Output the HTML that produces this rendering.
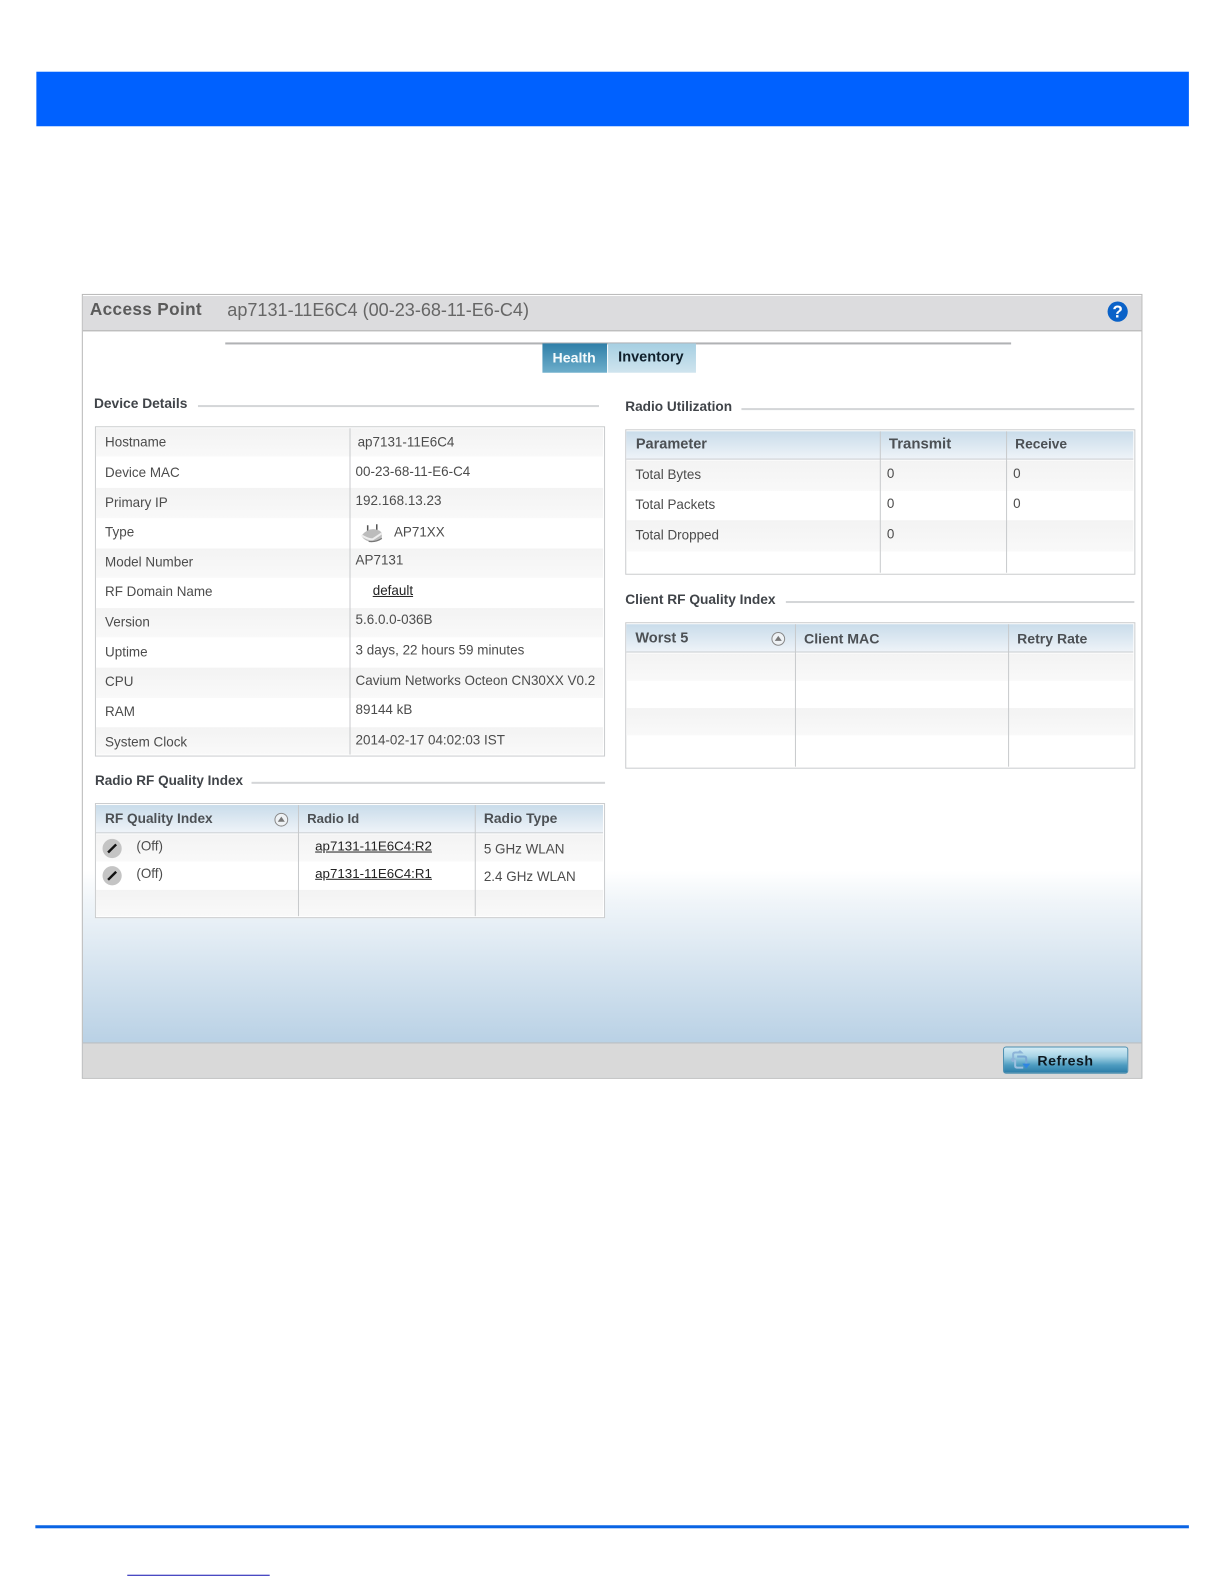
<!DOCTYPE html>
<html><head><meta charset="utf-8">
<style>
html,body{margin:0;padding:0;background:#fff}
#o{position:relative;width:1224px;height:1584px;overflow:hidden;background:#fff}
#p{position:absolute;left:0;top:0;width:1212px;height:1568px;transform:scale(1.0101);transform-origin:0 0;font-family:"Liberation Sans",sans-serif}
#p div,#p svg{position:absolute}
.t{font-size:13.3px;line-height:16px;height:16px;margin-top:.5px;color:#4c4c4c;white-space:nowrap}
.b{font-weight:bold;color:#4c5054;font-size:13.7px;line-height:16px;height:16px;margin-top:.6px;white-space:nowrap}
.s{font-weight:bold;color:#404449;font-size:13.5px;line-height:16px;height:16px;margin-top:.4px;white-space:nowrap}
.l{color:#222;text-decoration:underline}
.ln{height:1.6px;background:#d4d6d8}
.box{border:1.5px solid #cacccE;box-sizing:border-box;background:#fff}
.r{background:linear-gradient(#f3f3f3,#f9f9f9)}
.h{background:linear-gradient(#c9dcea,#eef3f8);border-bottom:1.5px solid #c8ccd0}
.v{width:1px;background:#c8cacc}
</style></head><body><div id="o"><div id="p">
<div style="left:36px;top:71px;width:1141px;height:54px;background:#0061ff"></div>

<div style="left:80.5px;top:291px;width:1050.5px;height:777px;box-sizing:border-box;border:1.5px solid #b8b8b8;background:linear-gradient(#fff 0,#fff 570px,#f0f5f9 600px,#b9d1e5 741px)"></div>
<div style="left:82px;top:292.5px;width:1047.5px;height:34.5px;background:#dcdcde;border-bottom:1px solid #b0b0b0"></div>
<div style="left:82px;top:1032px;width:1047.5px;height:34.5px;background:#d9d9d9;border-top:1px solid #b8bcc0;box-sizing:border-box"></div>
<div style="left:89px;top:297px;font-size:17px;line-height:20px;font-weight:bold;color:#5a5a5a;letter-spacing:.35px;white-space:nowrap">Access Point</div>
<div style="left:225px;top:297px;font-size:17.9px;line-height:20px;color:#666;white-space:nowrap">ap7131-11E6C4 (00-23-68-11-E6-C4)</div>
<svg style="left:1096px;top:298px" width="21" height="21" viewBox="0 0 21 21"><circle cx="10.5" cy="10.5" r="10" fill="#0a62c8"/><text x="10.5" y="16.5" text-anchor="middle" font-family="Liberation Sans" font-weight="bold" font-size="17" fill="#fff">?</text></svg>

<div style="left:223px;top:339px;width:778px;height:1.5px;background:#b0b2b4"></div>
<div style="left:537px;top:340px;width:64px;height:29px;background:linear-gradient(#2f7fa8,#6eaecb)"></div>
<div style="left:602px;top:340px;width:87px;height:29px;background:linear-gradient(#a6cfe2,#cfe4ee)"></div>
<div style="left:547px;top:346px;font-size:14px;line-height:16px;font-weight:bold;color:#f4fafc;white-space:nowrap">Health</div>
<div style="left:612px;top:346px;font-size:14.4px;line-height:16px;font-weight:bold;color:#10202c;white-space:nowrap">Inventory</div>

<!-- Device Details -->
<div class="s" style="left:93px;top:392px;font-size:13.65px">Device Details</div>
<div class="ln" style="left:196px;top:401px;width:397px"></div>
<div class="box" style="left:93.5px;top:422px;width:505px;height:326.5px"></div>
<div class="r" style="left:95px;top:423.5px;width:502px;height:28.5px"></div>
<div class="r" style="left:95px;top:483px;width:502px;height:30px"></div>
<div class="r" style="left:95px;top:543px;width:502px;height:29px"></div>
<div class="r" style="left:95px;top:602px;width:502px;height:29px"></div>
<div class="r" style="left:95px;top:661px;width:502px;height:30px"></div>
<div class="r" style="left:95px;top:720px;width:502px;height:27px"></div>
<div class="v" style="left:345.5px;top:424px;height:323px"></div>
<div class="t" style="left:104px;top:429px">Hostname</div>
<div class="t" style="left:104px;top:459px">Device MAC</div>
<div class="t" style="left:104px;top:489px">Primary IP</div>
<div class="t" style="left:104px;top:518px">Type</div>
<div class="t" style="left:104px;top:548px">Model Number</div>
<div class="t" style="left:104px;top:577px">RF Domain Name</div>
<div class="t" style="left:104px;top:607px">Version</div>
<div class="t" style="left:104px;top:637px">Uptime</div>
<div class="t" style="left:104px;top:666px">CPU</div>
<div class="t" style="left:104px;top:696px">RAM</div>
<div class="t" style="left:104px;top:726px">System Clock</div>
<div class="t" style="left:354px;top:429px">ap7131-11E6C4</div>
<div class="t" style="left:352px;top:458px">00-23-68-11-E6-C4</div>
<div class="t" style="left:352px;top:487px">192.168.13.23</div>
<svg style="left:356px;top:516px" width="24" height="22" viewBox="0 0 24 22"><path d="M8 4V10M17 3V10" stroke="#555" stroke-width="1.5"/><path d="M2 14Q8 7 15 8Q21 9 22 12V17Q16 21 9 20Q3 18 2 14Z" fill="#bcbcbc"/><path d="M2 14Q8 18 13 18L22 12" fill="none" stroke="#eee" stroke-width="2"/><path d="M9 20Q16 21 22 17" fill="none" stroke="#777" stroke-width="1.2"/></svg>
<div class="t" style="left:390px;top:518px">AP71XX</div>
<div class="t" style="left:352px;top:546px">AP7131</div>
<div class="t l" style="left:369px;top:576px">default</div>
<div class="t" style="left:352px;top:605px">5.6.0.0-036B</div>
<div class="t" style="left:352px;top:635px">3 days, 22 hours 59 minutes</div>
<div class="t" style="left:352px;top:665px">Cavium Networks Octeon CN30XX V0.2</div>
<div class="t" style="left:352px;top:694px">89144 kB</div>
<div class="t" style="left:352px;top:724px">2014-02-17 04:02:03 IST</div>

<!-- Radio RF Quality -->
<div class="s" style="left:94px;top:765px;font-size:13.4px">Radio RF Quality Index</div>
<div class="ln" style="left:249px;top:774px;width:349.5px"></div>
<div class="box" style="left:93.5px;top:795px;width:505px;height:113.5px"></div>
<div class="h" style="left:95px;top:796.5px;width:502px;height:27.5px"></div>
<div class="r" style="left:95px;top:826px;width:502px;height:27px"></div>
<div class="r" style="left:95px;top:881px;width:502px;height:26px"></div>
<div class="v" style="left:295px;top:797px;height:110px"></div>
<div class="v" style="left:470px;top:797px;height:110px"></div>
<div class="b" style="left:104px;top:802px;font-size:13.5px">RF Quality Index</div>
<div class="b" style="left:304px;top:802px;font-size:13.1px">Radio Id</div>
<div class="b" style="left:479px;top:802px">Radio Type</div>
<svg style="left:271px;top:804px" width="15" height="15" viewBox="0 0 15 15"><circle cx="7.5" cy="7.5" r="6.3" fill="#eef2f5" stroke="#888" stroke-width="1"/><path d="M7.5 4.5L11 9.5H4Z" fill="#777"/></svg>
<svg style="left:101px;top:830px" width="20" height="20" viewBox="0 0 20 20"><circle cx="10" cy="10" r="9.5" fill="#c4c4c4"/><path d="M6 14L14 6" stroke="#111" stroke-width="2.4"/></svg>
<svg style="left:101px;top:857px" width="20" height="20" viewBox="0 0 20 20"><circle cx="10" cy="10" r="9.5" fill="#c4c4c4"/><path d="M6 14L14 6" stroke="#111" stroke-width="2.4"/></svg>
<div class="t" style="left:135px;top:829px">(Off)</div>
<div class="t" style="left:135px;top:856px">(Off)</div>
<div class="t l" style="left:312px;top:829px;font-size:13.2px">ap7131-11E6C4:R2</div>
<div class="t l" style="left:312px;top:856px;font-size:13.2px">ap7131-11E6C4:R1</div>
<div class="t" style="left:479px;top:832px">5 GHz WLAN</div>
<div class="t" style="left:479px;top:859px">2.4 GHz WLAN</div>

<!-- Radio Utilization -->
<div class="s" style="left:619px;top:394.5px">Radio Utilization</div>
<div class="ln" style="left:734px;top:404px;width:389px"></div>
<div class="box" style="left:618.5px;top:425px;width:505px;height:143.5px"></div>
<div class="h" style="left:620px;top:426.5px;width:502px;height:27.5px"></div>
<div class="r" style="left:620px;top:456px;width:502px;height:30px"></div>
<div class="r" style="left:620px;top:515px;width:502px;height:31px"></div>
<div class="v" style="left:871px;top:427px;height:140px"></div>
<div class="v" style="left:996px;top:427px;height:140px"></div>
<div class="b" style="left:629.5px;top:431px;font-size:14.4px">Parameter</div>
<div class="b" style="left:880px;top:431px;font-size:14.8px">Transmit</div>
<div class="b" style="left:1005px;top:431px;font-size:13.6px">Receive</div>
<div class="t" style="left:629px;top:461px">Total Bytes</div>
<div class="t" style="left:629px;top:491px">Total Packets</div>
<div class="t" style="left:629px;top:521px">Total Dropped</div>
<div class="t" style="left:878px;top:460px">0</div>
<div class="t" style="left:878px;top:490px">0</div>
<div class="t" style="left:878px;top:520px">0</div>
<div class="t" style="left:1003px;top:460px">0</div>
<div class="t" style="left:1003px;top:490px">0</div>

<!-- Client RF -->
<div class="s" style="left:619px;top:586px;font-size:13.6px">Client RF Quality Index</div>
<div class="ln" style="left:778px;top:595px;width:345px"></div>
<div class="box" style="left:618.5px;top:616px;width:505px;height:144.5px"></div>
<div class="h" style="left:620px;top:617.5px;width:502px;height:27.5px"></div>
<div class="r" style="left:620px;top:647px;width:502px;height:27px"></div>
<div class="r" style="left:620px;top:701px;width:502px;height:27px"></div>
<div class="v" style="left:787px;top:618px;height:141px"></div>
<div class="v" style="left:998px;top:618px;height:141px"></div>
<div class="b" style="left:629px;top:623px;font-size:14.4px">Worst 5</div>
<div class="b" style="left:796px;top:623px;font-size:14px">Client MAC</div>
<div class="b" style="left:1007px;top:623px;font-size:13.9px">Retry Rate</div>
<svg style="left:763px;top:625px" width="15" height="15" viewBox="0 0 15 15"><circle cx="7.5" cy="7.5" r="6.3" fill="#eef2f5" stroke="#888" stroke-width="1"/><path d="M7.5 4.5L11 9.5H4Z" fill="#777"/></svg>

<!-- Refresh -->
<div style="left:993px;top:1036px;width:124px;height:27px;box-sizing:border-box;border-radius:3px;background:linear-gradient(#d4ecf6 0,#a8d4e6 35%,#4d9cc0 70%,#2c7da8 100%);border:1px solid #4d8fb0"></div>
<svg style="left:1000px;top:1040px" width="20" height="20" viewBox="0 0 20 20"><path d="M3 11V4Q3 2 5 2H11L9 0M3 11L1 8M3 11L5 8" fill="none" stroke="#8db4d8" stroke-width="2"/><path d="M7 6H14Q16 6 16 8V14" fill="none" stroke="#7aa8d4" stroke-width="2"/><path d="M16 18L12 13H20Z" fill="#2f86e0"/><path d="M5 9V15Q5 17 7 17H13" fill="none" stroke="#9cc0e0" stroke-width="2"/></svg>
<div style="left:1027px;top:1042px;font-size:14px;line-height:16px;font-weight:bold;color:#0c1820;letter-spacing:.5px;white-space:nowrap">Refresh</div>

<!-- footer -->
<div style="left:35px;top:1509.5px;width:1142px;height:3px;background:#0a64e4"></div>
<div style="left:126px;top:1559px;width:141px;height:1px;background:#1010b0"></div>
</div></div></body></html>
